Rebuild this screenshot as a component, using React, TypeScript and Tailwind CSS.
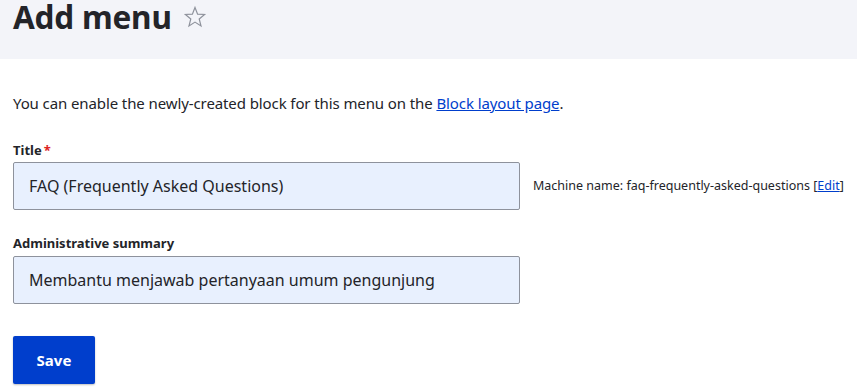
import { useState } from "react";

const font = { fontFamily: '"Noto Sans", "Open Sans", sans-serif' };

function StarIcon() {
  return (
    <svg viewBox="0 0 24 24" className="h-[24px] w-[24px]" fill="none" stroke="#8e929c" strokeWidth="1.2" strokeLinejoin="miter">
      <path d="M12 2.5l2.6 6.6 7 .4-5.4 4.5 1.8 6.9L12 17.1l-6 3.8 1.8-6.9L2.4 9.5l7-.4z" />
    </svg>
  );
}

export default function App() {
  const [title, setTitle] = useState("FAQ (Frequently Asked Questions)");
  const [summary, setSummary] = useState("Membantu menjawab pertanyaan umum pengunjung");

  return (
    <div className="min-h-[391px] bg-white text-[#232429]" style={font}>
      <div className="flex h-[59px] flex-col overflow-hidden bg-[#f3f4f9] px-[13px]">
        <div className="-mt-[6px] flex items-center gap-[11px]">
          <h1 className="text-[31.5px] font-bold leading-[46px] tracking-[-0.2px] text-[#232429]">Add menu</h1>
          <StarIcon />
        </div>
      </div>

      <div className="px-[13px] pt-[32px]">
        <p className="text-[15px] leading-[24px] tracking-[-0.1px]">
          You can enable the newly-created block for this menu on the{" "}
          <a href="#" className="text-[#003ecc] underline">Block layout page</a>.
        </p>

        <div className="mt-[26px]">
          <label className="flex items-center text-[13px] font-bold leading-[18px]">
            Title<span className="ml-[2px] text-[#dc2323]">*</span>
          </label>
          <div className="mt-[3px] flex items-center">
            <input
              value={title}
              onChange={(e) => setTitle(e.target.value)}
              className="h-[48px] w-[507px] rounded-[2px] border border-[#8e929c] bg-[#e8f0fe] px-[15px] text-[16px] text-[#232429] outline-none"
            />
            <span className="ml-[13px] text-[12.5px] text-[#232429]">
              Machine name: faq-frequently-asked-questions [<a href="#" className="text-[#003ecc] underline">Edit</a>]
            </span>
          </div>
        </div>

        <div className="mt-[24px]">
          <label className="block text-[13px] font-bold leading-[18px]">Administrative summary</label>
          <input
            value={summary}
            onChange={(e) => setSummary(e.target.value)}
            className="mt-[4px] h-[48px] w-[507px] rounded-[2px] border border-[#8e929c] bg-[#e8f0fe] px-[15px] text-[16px] text-[#232429] outline-none"
          />
        </div>

        <button className="mt-[32px] h-[48px] w-[82px] rounded-[2px] bg-[#003ecc] text-[15px] font-bold text-white shadow-[0_1px_2px_rgba(0,0,0,0.25)]">
          Save
        </button>
      </div>
    </div>
  );
}
